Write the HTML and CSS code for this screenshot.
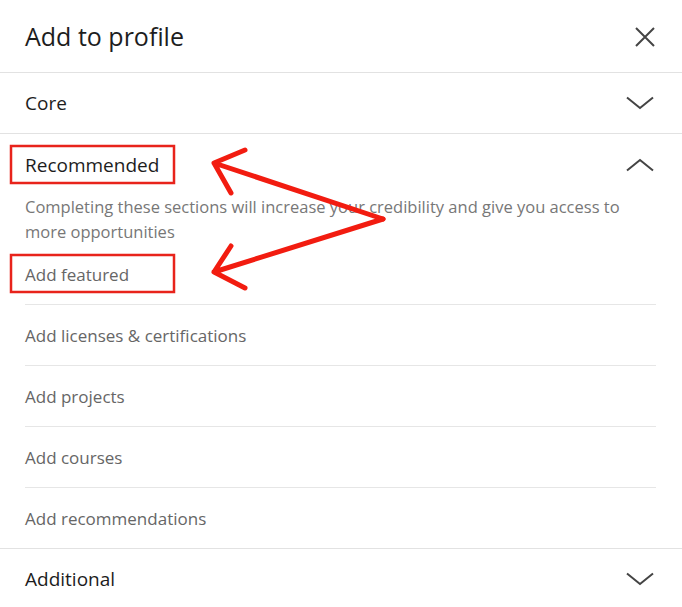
FILE: index.html
```html
<!DOCTYPE html>
<html>
<head>
<meta charset="utf-8">
<link rel="stylesheet" href="styles.css">
</head>
<body>
<div class="modal">
  <header class="modal-header">
    <h1 class="modal-title">Add to profile</h1>
    <svg class="close-icon" width="20" height="20" viewBox="0 0 20 20"><path d="M1 1 L19 19 M19 1 L1 19" stroke="#444" stroke-width="2" fill="none"/></svg>
  </header>

  <section class="group">
    <div class="group-head">
      <span class="group-title">Core</span>
      <svg class="chev" width="28" height="14" viewBox="0 0 28 14"><path d="M1 1.5 L14 12 L27 1.5" stroke="#444" stroke-width="2" fill="none"/></svg>
    </div>
  </section>

  <section class="group open">
    <div class="group-head">
      <span class="group-title">Recommended</span>
      <svg class="chev" width="28" height="14" viewBox="0 0 28 14"><path d="M1 12.5 L14 2 L27 12.5" stroke="#444" stroke-width="2" fill="none"/></svg>
    </div>
    <p class="group-desc">Completing these sections will increase your credibility and give you access to more opportunities</p>
    <ul class="items">
      <li class="item">Add featured</li>
      <li class="item">Add licenses &amp; certifications</li>
      <li class="item">Add projects</li>
      <li class="item">Add courses</li>
      <li class="item">Add recommendations</li>
    </ul>
  </section>

  <section class="group last">
    <div class="group-head">
      <span class="group-title">Additional</span>
      <svg class="chev" width="28" height="14" viewBox="0 0 28 14"><path d="M1 1.5 L14 12 L27 1.5" stroke="#444" stroke-width="2" fill="none"/></svg>
    </div>
  </section>

  <svg class="annot" width="682" height="607" viewBox="0 0 682 607">
    <rect x="11" y="146" width="163" height="37" fill="none" stroke="#e8231b" stroke-width="2.5"/>
    <rect x="11" y="255" width="163" height="37" fill="none" stroke="#e8231b" stroke-width="2.5"/>
    <g stroke="#f21c10" stroke-width="5" stroke-linecap="round" stroke-linejoin="round" fill="none">
      <path d="M383 219 L214 163 M245 150 L214 163 L231 193"/>
      <path d="M383 219 L214 272 M231 246 L214 272 L245 288"/>
    </g>
  </svg>
</div>
</body>
</html>
```
FILE: styles.css
```css
* { box-sizing: border-box; }
html, body { margin: 0; padding: 0; background: #fff; }
body {
  font-family: "Open Sans", "Noto Sans", sans-serif;
  color: rgba(0,0,0,0.9);
}
.modal {
  position: relative;
  width: 682px;
  height: 607px;
  overflow: hidden;
}
.modal-header {
  height: 73px;
  display: flex;
  align-items: center;
  justify-content: space-between;
  padding: 0 27px 0 25px;
  border-bottom: 1px solid #e2e2e2;
}
.modal-title {
  margin: 0;
  font-size: 25px;
  font-weight: 400;
  color: #1d1d1d;
}
.close-icon { display: block; margin-top: 1px; }
.group { border-bottom: 1px solid #e2e2e2; }
.group.last { border-bottom: none; }
.group-head {
  height: 60px;
  display: flex;
  align-items: center;
  justify-content: space-between;
  padding: 0 28px 0 25px;
}
.group-title {
  font-size: 19px;
  color: #1d1d1d;
}
.chev { display: block; }
.open .group-head { height: 61px; }
.group-desc {
  margin: 0;
  padding: 0 50px 0 25px;
  font-size: 16.5px;
  line-height: 24.5px;
  color: #777;
}
.items { list-style: none; margin: 0; padding: 0; }
.item {
  height: 61px;
  margin: 0 26px 0 25px;
  display: flex;
  align-items: center;
  border-bottom: 1px solid #e6e6e6;
  font-size: 17px;
  color: #666;
}
.item:last-child { border-bottom: none; margin: 0; padding-left: 25px; height: 60px; }
.annot {
  position: absolute;
  left: 0;
  top: 0;
  pointer-events: none;
}
```
